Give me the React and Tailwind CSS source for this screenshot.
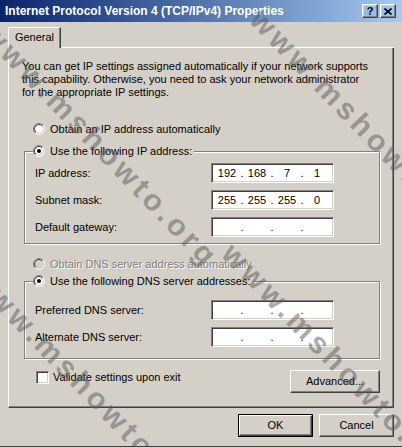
import React from 'react';

const raised =
  'border border-t-white border-l-white border-r-[#404040] border-b-[#404040] shadow-[inset_-1px_-1px_0_#808080,inset_1px_1px_0_#d4d0c8]';
const sunken =
  'border border-t-[#808080] border-l-[#808080] border-r-white border-b-white shadow-[inset_1px_1px_0_#404040,inset_-1px_-1px_0_#d4d0c8]';

const Radio = ({ checked, disabled }) => (
  <svg width="12" height="12" viewBox="0 0 12 12" className="shrink-0">
    <defs>
      <linearGradient id="rOuter" x1="0" y1="0" x2="1" y2="1">
        <stop offset="0.5" stopColor="#808080" />
        <stop offset="0.5" stopColor="#ffffff" />
      </linearGradient>
      <linearGradient id="rInner" x1="0" y1="0" x2="1" y2="1">
        <stop offset="0.5" stopColor="#404040" />
        <stop offset="0.5" stopColor="#d4d0c8" />
      </linearGradient>
    </defs>
    <circle cx="6" cy="6" r="5.5" fill="none" stroke="url(#rOuter)" />
    <circle cx="6" cy="6" r="4.5" fill={disabled ? '#d4d0c8' : '#ffffff'} stroke="url(#rInner)" />
    {checked && <circle cx="6" cy="6" r="2" fill="#000" />}
  </svg>
);

const IpField = ({ parts = ['', '', '', ''] }) => (
  <div className={`w-[123px] h-[20px] bg-white flex items-center pl-[3px] ${sunken}`}>
    {parts.map((p, i) => (
      <React.Fragment key={i}>
        {i > 0 && <span className="w-[6px] text-center">.</span>}
        <span className="w-[24px] text-center">{p}</span>
      </React.Fragment>
    ))}
  </div>
);

const Row = ({ label, parts }) => (
  <div className="flex items-center h-[20px]">
    <span className="w-[176px]">{label}</span>
    <IpField parts={parts} />
  </div>
);

const Button = ({ children, className = '', isDefault }) =>
  isDefault ? (
    <div className={`border border-black ${className}`}>
      <div className={`w-full h-full flex items-center justify-center ${raised}`}>{children}</div>
    </div>
  ) : (
    <div className={`flex items-center justify-center ${raised} ${className}`}>{children}</div>
  );

// diagonal site watermark laid over the dialog
const Watermark = ({ x, y }) => (
  <span
    className="absolute origin-top-left rotate-[46deg] whitespace-nowrap text-[30px] font-bold tracking-[4px] text-[#5a5a5a]/50 pointer-events-none select-none"
    style={{ left: x, top: y }}
  >
    www.mshowto.org
  </span>
);

export default function App() {
  return (
    <div className="relative w-[402px] h-[447px] overflow-hidden bg-[#d4d0c8] border-b border-[#404040] flex flex-col font-['Liberation_Sans',Arial,sans-serif] text-[11px] text-black leading-none">
      {/* title bar */}
      <div className="h-[22px] shrink-0 flex items-center pl-[5px] pr-[6px] bg-gradient-to-r from-[#0a246a] to-[#a6caf0]">
        <span className="text-white font-bold text-[12px]">
          Internet Protocol Version 4 (TCP/IPv4) Properties
        </span>
        <div className="ml-auto flex gap-[2px]">
          <div className={`w-[16px] h-[14px] flex items-center justify-center font-bold text-[11px] ${raised}`}>?</div>
          <div className={`w-[16px] h-[14px] flex items-center justify-center ${raised}`}>
            <svg width="8" height="7" viewBox="0 0 8 7">
              <path d="M0.5 0.5 L7.5 6.5 M7.5 0.5 L0.5 6.5" stroke="#000" strokeWidth="1.6" />
            </svg>
          </div>
        </div>
      </div>

      {/* tab strip */}
      <div className="mt-[5px] px-[8px] h-[21px] flex items-end">
        <div className="w-[53px] h-[21px] rounded-tl-[2px] border-l border-t border-white border-r border-r-[#404040] shadow-[inset_-1px_0_0_#808080] flex items-center justify-center pb-[1px]">
          General
        </div>
        <div className="flex-1 h-[1px] bg-white" />
      </div>

      {/* panel */}
      <div className="mx-[8px] h-[360px] border-l border-white border-r border-b border-r-[#404040] border-b-[#404040] shadow-[inset_-1px_-1px_0_#808080] flex flex-col">
        <p className="pt-[12px] pl-[13px] leading-[13px] whitespace-nowrap">
          You can get IP settings assigned automatically if your network supports
          <br />
          this capability. Otherwise, you need to ask your network administrator
          <br />
          for the appropriate IP settings.
        </p>

        <div className="mt-[22px] ml-[24px] h-[16px] flex items-center gap-[5px]">
          <Radio />
          <span>Obtain an IP address automatically</span>
        </div>

        <fieldset className="mt-[6px] ml-[15px] w-[356px] border border-[#808080] shadow-[inset_1px_1px_0_#fff,1px_1px_0_#fff]">
          <legend className="ml-[8px] pr-[2px] bg-[#d4d0c8]">
            <span className="h-[16px] flex items-center gap-[5px]">
              <Radio checked />
              <span>Use the following IP address:</span>
            </span>
          </legend>
          <div className="pl-[10px] pt-[4px] pb-[6px] flex flex-col gap-[7px]">
            <Row label="IP address:" parts={['192', '168', '7', '1']} />
            <Row label="Subnet mask:" parts={['255', '255', '255', '0']} />
            <Row label="Default gateway:" />
          </div>
        </fieldset>

        <div className="mt-[12px] ml-[24px] h-[16px] flex items-center gap-[5px]">
          <Radio disabled />
          <span className="text-[#808080] [text-shadow:1px_1px_0_#fff]">Obtain DNS server address automatically</span>
        </div>

        <fieldset className="mt-[1px] ml-[15px] w-[356px] border border-[#808080] shadow-[inset_1px_1px_0_#fff,1px_1px_0_#fff]">
          <legend className="ml-[8px] pr-[2px] bg-[#d4d0c8]">
            <span className="h-[16px] flex items-center gap-[5px]">
              <Radio checked />
              <span>Use the following DNS server addresses:</span>
            </span>
          </legend>
          <div className="pl-[10px] pt-[11px] pb-[11px] flex flex-col gap-[7px]">
            <Row label="Preferred DNS server:" />
            <Row label="Alternate DNS server:" />
          </div>
        </fieldset>

        <div className="mt-[11px] flex items-start">
          <div className="mt-[1px] ml-[27px] flex items-center gap-[4px]">
            <div className={`w-[13px] h-[13px] bg-white ${sunken}`} />
            <span>Validate settings upon exit</span>
          </div>
          <Button className="ml-auto mr-[13px] w-[90px] h-[23px]">Advanced...</Button>
        </div>
      </div>

      {/* dialog buttons */}
      <div className="mt-[6px] pr-[8px] flex justify-end gap-[6px]">
        <Button isDefault className="w-[75px] h-[23px]">OK</Button>
        <Button className="w-[75px] h-[23px]">Cancel</Button>
      </div>

      <Watermark x={-2} y={18} />
      <Watermark x={266} y={4} />
      <Watermark x={-14} y={262} />
      <Watermark x={238} y={238} />
    </div>
  );
}
